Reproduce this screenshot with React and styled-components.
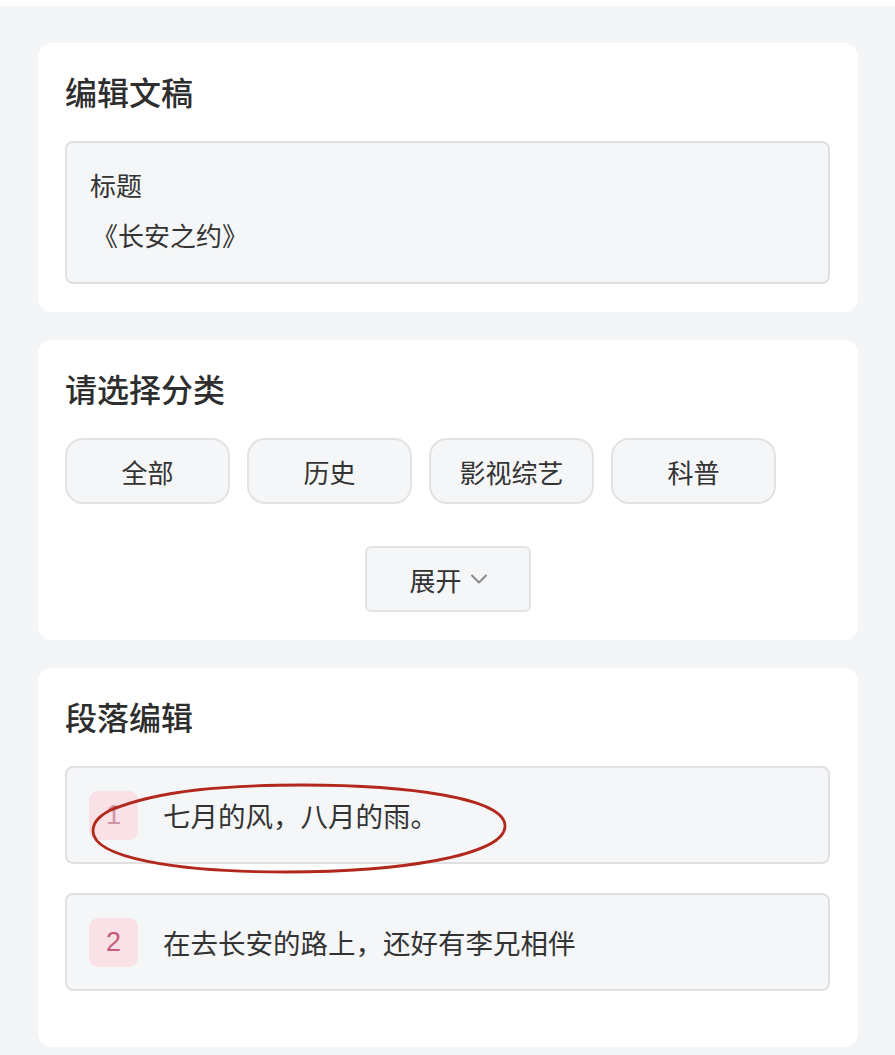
import styled, { createGlobalStyle } from "styled-components";

const GlobalStyle = createGlobalStyle`
  html, body {
    margin: 0;
    padding: 0;
    background: #f4f5f7;
    font-family: "Noto Sans CJK SC", "Noto Sans", sans-serif;
    color: #333;
  }
`;

const Page = styled.div`
  border-top: 6px solid #fff;
  padding: 37px 37px 8px 38px;
  display: flex;
  flex-direction: column;
  gap: 28px;
`;

const Card = styled.section`
  background: #fff;
  border-radius: 14px;
  padding: 28px 28px ${({ $bottom }) => $bottom || 28}px 27px;
`;

const CardTitle = styled.h2`
  margin: 0 0 30px;
  font-size: 32px;
  line-height: 40px;
  font-weight: 500;
  color: #2e2e2e;
`;

const Field = styled.div`
  background: #f5f6f8;
  border: 2px solid #e0e0e0;
  border-radius: 8px;
  padding: 25px 23px 30px;
  display: flex;
  flex-direction: column;
  gap: 16px;
`;

const FieldLabel = styled.div`
  font-size: 26px;
  line-height: 34px;
`;

const FieldValue = styled.div`
  font-size: 26px;
  line-height: 34px;
  padding-left: 2px;
`;

const Chips = styled.div`
  display: flex;
  gap: 17px;
`;

const Chip = styled.button`
  width: 165px;
  height: 66px;
  box-sizing: border-box;
  background: #f5f6f8;
  border: 2px solid #e3e3e3;
  border-radius: 18px;
  font-family: inherit;
  font-size: 26px;
  color: #333;
  padding: 0;
`;

const MoreWrap = styled.div`
  display: flex;
  justify-content: center;
  margin-top: 42px;
`;

const MoreButton = styled.button`
  width: 166px;
  height: 66px;
  box-sizing: border-box;
  background: #f5f6f8;
  border: 2px solid #e3e3e3;
  border-radius: 6px;
  font-family: inherit;
  font-size: 26px;
  color: #333;
  display: flex;
  align-items: center;
  justify-content: center;
  gap: 8px;
  padding: 0 0 0 2px;
`;

const List = styled.div`
  display: flex;
  flex-direction: column;
  gap: 29px;
`;

const Row = styled.div`
  position: relative;
  height: 98px;
  box-sizing: border-box;
  background: #f5f6f8;
  border: 2px solid #e0e0e0;
  border-radius: 8px;
  padding: 0 22px;
  display: flex;
  align-items: center;
  gap: 25px;
`;

const Badge = styled.span`
  width: 49px;
  height: 49px;
  flex: none;
  border-radius: 9px;
  background: #f9e1e6;
  color: ${({ $faded }) => ($faded ? "#cf94a8" : "#c45a7c")};
  font-family: "Liberation Sans", "Noto Sans", sans-serif;
  font-size: 27px;
  display: flex;
  align-items: center;
  justify-content: center;
`;

const RowText = styled.span`
  font-size: 27.5px;
  line-height: 34px;
`;

/* hand-drawn annotation around the first paragraph */
const Circle = styled.svg`
  position: absolute;
  left: 0;
  top: 0;
  overflow: visible;
  pointer-events: none;
`;

const chips = ["全部", "历史", "影视综艺", "科普"];
const paragraphs = ["七月的风，八月的雨。", "在去长安的路上，还好有李兄相伴"];

const Chevron = () => (
  <svg width="18" height="12" viewBox="0 0 18 12" fill="none">
    <path d="M2 2.5 L9 9.5 L16 2.5" stroke="#8a8a8a" strokeWidth="2" strokeLinecap="round" strokeLinejoin="round" />
  </svg>
);

export default function App() {
  return (
    <>
      <GlobalStyle />
      <Page>
        <Card>
          <CardTitle>编辑文稿</CardTitle>
          <Field>
            <FieldLabel>标题</FieldLabel>
            <FieldValue>《长安之约》</FieldValue>
          </Field>
        </Card>

        <Card>
          <CardTitle>请选择分类</CardTitle>
          <Chips>
            {chips.map((c) => (
              <Chip key={c}>{c}</Chip>
            ))}
          </Chips>
          <MoreWrap>
            <MoreButton>
              展开 <Chevron />
            </MoreButton>
          </MoreWrap>
        </Card>

        <Card $bottom={56}>
          <CardTitle>段落编辑</CardTitle>
          <List>
            {paragraphs.map((p, i) => (
              <Row key={i}>
                <Badge $faded={i === 0}>{i + 1}</Badge>
                <RowText>{p}</RowText>
                {i === 0 && (
                  <Circle width="480" height="120" viewBox="0 0 480 120">
                    <path
                      d="M44 42 C92 22 160 17 236 17 C340 17 438 30 438 58 C438 88 330 104 220 104 C110 104 26 90 26 63 C26 53 34 46 50 39"
                      stroke="#b3281c"
                      strokeWidth="2.8"
                      fill="none"
                      strokeLinecap="round"
                    />
                  </Circle>
                )}
              </Row>
            ))}
          </List>
        </Card>
      </Page>
    </>
  );
}
